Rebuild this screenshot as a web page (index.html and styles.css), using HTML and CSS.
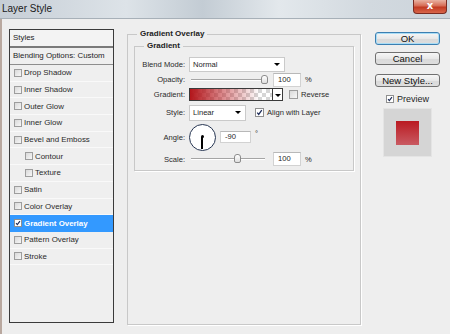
FILE: index.html
```html
<!DOCTYPE html>
<html lang="en">
<head>
    <meta charset="UTF-8">
    <title>Layer Style</title>
    <link rel="stylesheet" href="styles.css">
</head>
<body>
    <div class="window">
        <div class="titlebar">
            <span class="title">Layer Style</span>
            <span class="close">x</span>
        </div>

        <div class="dialog">
            <!-- styles list -->
            <div class="styles">
                <div class="styles-head">Styles</div>
                <div class="blend-head">Blending Options: Custom</div>
                <ul class="fx-list">
                    <li><span class="box"></span>Drop Shadow</li>
                    <li><span class="box"></span>Inner Shadow</li>
                    <li><span class="box"></span>Outer Glow</li>
                    <li><span class="box"></span>Inner Glow</li>
                    <li><span class="box"></span>Bevel and Emboss</li>
                    <li class="sub"><span class="box"></span>Contour</li>
                    <li class="sub"><span class="box"></span>Texture</li>
                    <li><span class="box"></span>Satin</li>
                    <li><span class="box"></span>Color Overlay</li>
                    <li class="active">
                        <span class="box checked"><svg viewBox="0 0 8 8"><path d="M1.4 4.2 L3.1 6.2 L6.6 1.4"/></svg></span>Gradient Overlay
                    </li>
                    <li><span class="box"></span>Pattern Overlay</li>
                    <li><span class="box"></span>Stroke</li>
                </ul>
            </div>

            <!-- gradient overlay settings -->
            <fieldset class="group outer">
                <legend>Gradient Overlay</legend>
                <fieldset class="group inner">
                    <legend>Gradient</legend>

                    <div class="row r-blend">
                        <span class="label">Blend Mode:</span>
                        <div class="select mode">Normal</div>
                    </div>

                    <div class="row r-opacity">
                        <span class="label">Opacity:</span>
                        <div class="track"><span class="thumb opacity-thumb"></span></div>
                        <div class="field">100</div>
                        <span class="unit">%</span>
                    </div>

                    <div class="row r-gradient">
                        <span class="label">Gradient:</span>
                        <div class="grad"></div>
                        <div class="grad-arrow"></div>
                        <span class="box big reverse"></span>
                        <span class="check-text">Reverse</span>
                    </div>

                    <div class="row r-style">
                        <span class="label">Style:</span>
                        <div class="select linear">Linear</div>
                        <span class="box big align checked"><svg viewBox="0 0 8 8"><path d="M1.4 4.2 L3.1 6.2 L6.6 1.4"/></svg></span>
                        <span class="check-text">Align with Layer</span>
                    </div>

                    <div class="row r-angle">
                        <span class="label">Angle:</span>
                        <div class="dial"></div>
                        <div class="field angle">-90</div>
                        <span class="deg">°</span>
                    </div>

                    <div class="row r-scale">
                        <span class="label">Scale:</span>
                        <div class="track"><span class="thumb scale-thumb"></span></div>
                        <div class="field">100</div>
                        <span class="unit">%</span>
                    </div>
                </fieldset>
            </fieldset>

            <!-- buttons + preview -->
            <div class="side">
                <button class="btn btn-default">OK</button>
                <button class="btn cancel">Cancel</button>
                <button class="btn new-style">New Style...</button>
                <div class="preview-check">
                    <span class="box checked"><svg viewBox="0 0 8 8"><path d="M1.4 4.2 L3.1 6.2 L6.6 1.4"/></svg></span>
                    Preview
                </div>
                <div class="preview"><div class="swatch"></div></div>
            </div>
        </div>
    </div>
</body>
</html>
```

FILE: styles.css
```css
* {
    margin: 0;
    padding: 0;
    box-sizing: border-box;
}
body {
    font-family: "Liberation Sans", Arial, sans-serif;
    font-size: 7.6px;
    color: #1e1e1e;
    background: #eeeeee;
}
.window {
    width: 450px;
    height: 334px;
    background: #eeeeee;
    overflow: hidden;
}

/* title bar */
.titlebar {
    height: 19px;
    display: flex;
    justify-content: space-between;
    align-items: flex-start;
    background: linear-gradient(to right, #c6ced6, #dde3e8 28%, #c3ccd4 45%, #e3e8ec 62%, #d2d9df 82%, #ccd4db);
    border-bottom: 1px solid #a7b0b8;
}
.title {
    font-size: 10px;
    line-height: 18px;
    padding-left: 2px;
    color: #1a1a1a;
}
.close {
    width: 34px;
    height: 14px;
    margin-right: 3px;
    border: 1px solid #7a2c22;
    border-top: none;
    border-radius: 0 0 4px 4px;
    background: linear-gradient(#e9b2a2, #d66c55 45%, #c23a22 55%, #d8664b);
    color: #fff;
    font: bold 10px/12px "DejaVu Sans", sans-serif;
    text-align: center;
}

/* dialog body */
.dialog {
    display: flex;
    align-items: flex-start;
    padding: 10px 0 0 7px;
    border-left: 2px solid #b9a89f;
    height: 315px;
}

/* styles list */
.styles {
    width: 105px;
    height: 294px;
    border: 1px solid #3a3a3a;
    background: #efefef;
    font-size: 7.9px;
}
.styles-head {
    height: 16px;
    line-height: 16px;
    padding-left: 3px;
    background: #f3f3f3;
}
.blend-head {
    height: 19px;
    line-height: 16px;
    padding-left: 3px;
    border-top: 2px solid #7a7a7a;
    border-bottom: 1px solid #8e8e8e;
}
.fx-list {
    list-style: none;
}
.fx-list li {
    height: 16.7px;
    display: flex;
    align-items: center;
    padding-left: 4px;
    border-bottom: 1px solid #f9f9f9;
    color: #2a2a2a;
}
.fx-list li.sub {
    padding-left: 15px;
}
.fx-list li.active {
    background: #3399ff;
    color: #fff;
    font-weight: bold;
    border-bottom-color: #3399ff;
}

/* checkbox */
.box {
    width: 8px;
    height: 8px;
    margin-right: 2px;
    border: 1px solid #9d9d9d;
    background: linear-gradient(135deg, #d9d9d9, #f7f7f7);
    flex-shrink: 0;
    display: flex;
}
.box.big {
    width: 9px;
    height: 9px;
}
.box.checked {
    background: #fff;
    border-color: #8f8f8f;
}
.box svg {
    width: 100%;
    height: 100%;
    fill: none;
    stroke: #1d2c59;
    stroke-width: 1.5;
}

/* group boxes */
.group {
    border: 1px solid #c8c8c8;
    box-shadow: 1px 1px 0 #fff;
    min-width: 0;
}
.group legend {
    font-weight: bold;
    font-size: 8px;
    line-height: 10px;
    padding: 0 3px;
    color: #222;
}
.outer {
    width: 234px;
    height: 296px;
    margin-left: 13px;
    padding: 0 6px;
}
.outer > legend {
    margin-left: 3px;
}
.inner {
    width: 220px;
    margin-top: 2px;
    padding: 5px 0 4px 0;
}
.inner > legend {
    margin-left: 9px;
}

/* rows */
.row {
    display: flex;
    align-items: center;
}
.label {
    width: 54px;
    padding-right: 4px;
    text-align: right;
    flex-shrink: 0;
    color: #2a2a2a;
}
.r-blend { height: 16px; }
.r-opacity { height: 15px; }
.r-gradient { height: 15px; }
.r-style { height: 17px; margin-top: 2px; }
.r-angle { height: 28px; margin-top: 2px; }
.r-scale { height: 14px; margin-top: 1px; }

.select {
    position: relative;
    height: 15px;
    background: #fff;
    border: 1px solid #cacaca;
    padding-left: 3px;
    line-height: 13px;
}
.select::after {
    content: "";
    position: absolute;
    right: 4px;
    top: 5px;
    border-left: 3px solid transparent;
    border-right: 3px solid transparent;
    border-top: 3px solid #000;
}
.mode { width: 96px; }
.linear { width: 57px; height: 16px; line-height: 14px; }

.track {
    position: relative;
    width: 74px;
    height: 2px;
    margin-left: 2px;
    border-top: 1px solid #a5a5a5;
    border-bottom: 1px solid #fff;
}
.thumb {
    position: absolute;
    top: -5px;
    width: 7px;
    height: 9px;
    border: 1px solid #8c8c8c;
    border-radius: 3px 3px 2px 2px;
    background: linear-gradient(#fff, #dedede);
}
.opacity-thumb { left: 70px; }
.scale-thumb { left: 43px; }

.field {
    width: 28px;
    height: 14px;
    margin-left: 8px;
    background: #fff;
    border: 1px solid #d2d2d2;
    border-top-color: #b8b8b8;
    padding-left: 4px;
    line-height: 12px;
}
.unit {
    margin-left: 4px;
}

.grad {
    width: 84px;
    height: 13px;
    border: 1px solid #3a3a3a;
    background:
        linear-gradient(to right, #b3161b, rgba(190, 40, 45, 0.55) 40%, rgba(200, 60, 60, 0) 85%),
        repeating-conic-gradient(#d6d6d6 0 25%, #fff 0 50%) 0 0 / 8px 8px;
}
.grad-arrow {
    position: relative;
    width: 10px;
    height: 13px;
    border: 1px solid #3a3a3a;
    border-left: none;
    background: #fff;
}
.grad-arrow::after {
    content: "";
    position: absolute;
    left: 2px;
    top: 5px;
    border-left: 3px solid transparent;
    border-right: 3px solid transparent;
    border-top: 3px solid #000;
}
.reverse { margin-left: 6px; }
.align { margin-left: 9px; }
.check-text {
    margin-left: 1px;
    color: #2a2a2a;
}

.dial {
    position: relative;
    width: 27px;
    height: 27px;
    border: 1.5px solid #263552;
    border-radius: 50%;
    background: #fff;
}
.dial::before {
    content: "";
    position: absolute;
    left: 10.5px;
    top: 10.5px;
    width: 3px;
    height: 3px;
    border-radius: 50%;
    background: #000;
}
.dial::after {
    content: "";
    position: absolute;
    left: 11.25px;
    top: 12px;
    width: 1.5px;
    height: 12px;
    background: #000;
}
.angle {
    width: 31px;
    height: 12px;
    margin-left: 4px;
    line-height: 10px;
}
.deg {
    align-self: flex-start;
    margin: 6px 0 0 4px;
}

/* right column */
.side {
    margin-left: 14px;
    width: 65px;
}
.btn {
    display: block;
    width: 65px;
    height: 13px;
    border: 1px solid #707070;
    border-radius: 3px;
    background: linear-gradient(#f6f6f6, #e8e8e8 50%, #d9d9d9 51%, #dedede);
    font-family: "Liberation Sans", Arial, sans-serif;
    font-size: 9.5px;
    line-height: 11px;
    color: #111;
}
.btn-default {
    margin-top: 3px;
    border-color: #3c7fb1;
    box-shadow: inset 0 0 0 1px #a9ddf6;
}
.cancel { margin-top: 7px; }
.new-style { margin-top: 9px; }

.preview-check {
    display: flex;
    align-items: center;
    height: 12px;
    margin: 6px 0 0 11px;
    font-size: 9px;
}
.preview-check .box {
    margin-right: 3px;
}
.preview {
    width: 49px;
    height: 49px;
    margin: 3px 0 0 8px;
    background: #d5d5d5;
    border: 1px solid #e4e4e4;
    display: flex;
    align-items: center;
    justify-content: center;
}
.swatch {
    width: 23px;
    height: 24px;
    background: linear-gradient(#ba1a21, #c95a62);
}
```
